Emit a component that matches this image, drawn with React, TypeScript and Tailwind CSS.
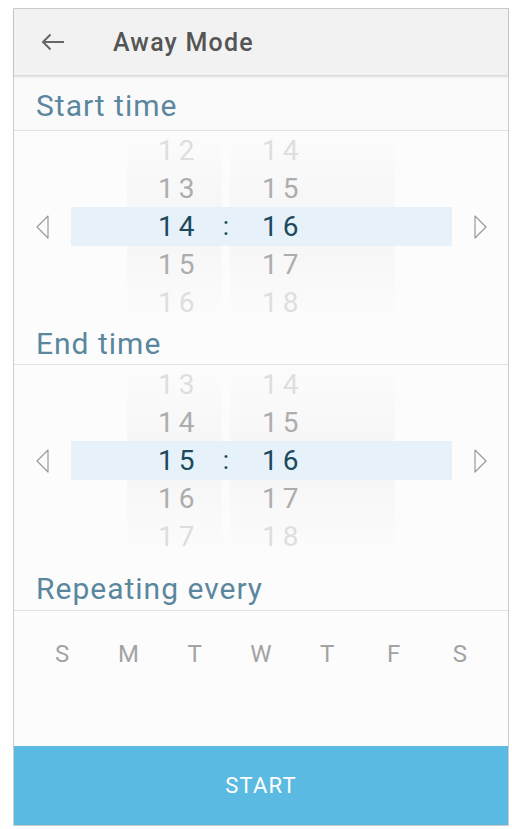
import React from "react";

const font = { fontFamily: "Roboto, 'Noto Sans', sans-serif" };

function Arrow({ dir }: { dir: "left" | "right" }) {
  return (
    <svg width="13" height="24" viewBox="0 0 13 24" className="block">
      {dir === "left" ? (
        <polygon points="12,1 1,12 12,23" fill="none" stroke="#9a9a9a" strokeWidth="1.2" strokeLinejoin="round" />
      ) : (
        <polygon points="1,1 12,12 1,23" fill="none" stroke="#9a9a9a" strokeWidth="1.2" strokeLinejoin="round" />
      )}
    </svg>
  );
}

function Picker({ hours, mins }: { hours: string[]; mins: string[] }) {
  const color = (i: number) =>
    i === 2 ? "text-[#1c4a5c]" : i === 1 || i === 3 ? "text-[#adadad]" : "text-[#dedede]";
  return (
    <div className="flex h-[190px] bg-[#fcfcfc]">
      <div className="w-[57px] flex items-center justify-center pt-[2px]">
        <Arrow dir="left" />
      </div>
      <div className="relative flex-1">
        <div className="absolute left-[56px] top-0 bottom-0 w-[95px] bg-linear-to-b from-[#fcfcfc] via-[#f5f5f5] to-[#fcfcfc]" />
        <div className="absolute left-[159px] top-0 bottom-0 w-[165px] bg-linear-to-b from-[#fcfcfc] via-[#f5f5f5] to-[#fcfcfc]" />
        <div className="absolute left-0 right-0 top-[76px] h-[39px] bg-[#e7f1f9]" />
        <div className="relative flex h-full">
          <div className="ml-[56px] w-[95px] pt-[1px] pl-[31px]">
            {hours.map((h, i) => (
              <div key={i} className={`h-[38px] leading-[38px] text-[28px] tracking-[5px] ${color(i)}`}>
                {h}
              </div>
            ))}
          </div>
          <div className="w-[8px] pt-[1px]">
            {[0, 1, 2, 3, 4].map((i) => (
              <div key={i} className="h-[38px] leading-[36px] text-[26px] text-center text-[#1c4a5c]">
                {i === 2 ? ":" : ""}
              </div>
            ))}
          </div>
          <div className="w-[165px] pt-[1px] pl-[32px]">
            {mins.map((m, i) => (
              <div key={i} className={`h-[38px] leading-[38px] text-[28px] tracking-[5px] ${color(i)}`}>
                {m}
              </div>
            ))}
          </div>
        </div>
      </div>
      <div className="w-[56px] flex items-center justify-center pt-[2px]">
        <Arrow dir="right" />
      </div>
    </div>
  );
}

export default function App() {
  const days = ["S", "M", "T", "W", "T", "F", "S"];
  return (
    <div className="w-[512px] h-[829px] bg-white pt-[8px] pl-[13px] pr-[3px]" style={font}>
      <div className="border border-[#cccccc] flex flex-col bg-[#fcfcfc]">
        <div className="h-[67px] bg-[#f2f2f2] flex items-center border-b border-[#dcdcdc] shadow-[0_1px_2px_rgba(0,0,0,0.12)] relative z-10">
          <div className="w-[99px] flex items-center pl-[27px]">
            <svg width="24" height="18" viewBox="0 0 24 18">
              <path d="M23 9H2M9.5 1.5L2 9l7.5 7.5" fill="none" stroke="#666" strokeWidth="2" strokeLinecap="butt" />
            </svg>
          </div>
          <div className="text-[25px] tracking-[1.2px] font-medium text-[#555555] leading-none">Away Mode</div>
        </div>
        <div className="h-[55px] border-b border-[#e2e2e2] flex items-end pl-[22px] pb-[8px] bg-[#fafafa]">
          <div className="text-[30px] tracking-[1px] leading-[32px] text-[#5a879e]">Start time</div>
        </div>
        <Picker hours={["12", "13", "14", "15", "16"]} mins={["14", "15", "16", "17", "18"]} />
        <div className="h-[44px] border-b border-[#e2e2e2] flex items-end pl-[22px] pb-[4px] bg-[#fcfcfc]">
          <div className="text-[30px] tracking-[1px] leading-[32px] text-[#5a879e]">End time</div>
        </div>
        <Picker hours={["13", "14", "15", "16", "17"]} mins={["14", "15", "16", "17", "18"]} />
        <div className="h-[56px] border-b border-[#e2e2e2] flex items-end pl-[22px] pb-[5px] bg-[#fcfcfc]">
          <div className="text-[30px] tracking-[1px] leading-[32px] text-[#5a879e]">Repeating every</div>
        </div>
        <div className="h-[135px] px-[15px] pt-[29px] bg-[#fcfcfc]">
          <div className="grid grid-cols-7">
            {days.map((d, i) => (
              <div key={i} className="text-center text-[24px] leading-[28px] text-[#a3a3a3]">
                {d}
              </div>
            ))}
          </div>
        </div>
        <div className="h-[79px] bg-[#5bbae2] flex items-center justify-center">
          <span className="text-white text-[22px] tracking-[1.2px] leading-none">START</span>
        </div>
      </div>
    </div>
  );
}
